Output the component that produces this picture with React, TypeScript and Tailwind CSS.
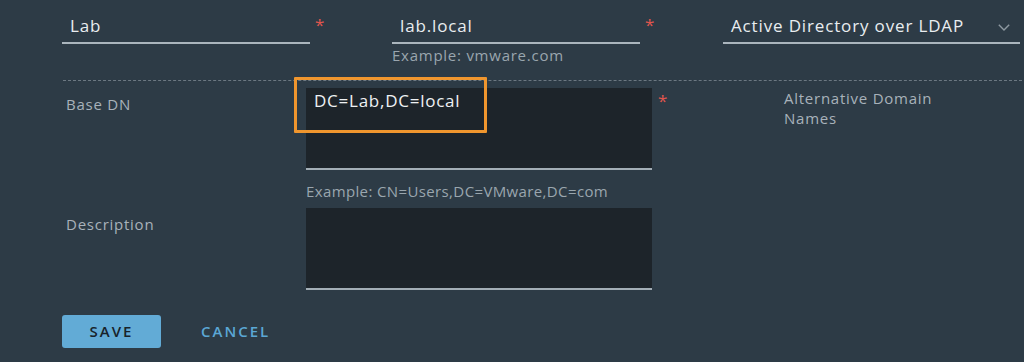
const font = { fontFamily: '"Open Sans", "Liberation Sans", sans-serif' };

function Req() {
  return <span className="text-[#e0564e] text-[17px] leading-none">*</span>;
}

function UnderlineInput({ value }: { value: string }) {
  return (
    <div className="w-[248px] h-[44px] border-b-2 border-[#aab5bd] pl-2 pt-[16px] text-[17px] leading-[20px] tracking-[0.05em] text-[#e9edf0]">
      {value}
    </div>
  );
}

export default function App() {
  return (
    <div className="relative w-[1024px] h-[362px] bg-[#2d3b46] overflow-hidden" style={font}>
      {/* top row */}
      <div className="flex pl-[62px]">
        <div className="w-[330px] flex items-start gap-[5px]">
          <UnderlineInput value="Lab" />
          <div className="pt-[13px]"><Req /></div>
        </div>
        <div className="w-[331px] flex items-start gap-[5px]">
          <div>
            <UnderlineInput value="lab.local" />
            <div className="mt-[2px] text-[15px] leading-[18px] tracking-[0.05em] text-[#9aa6ae]">Example: vmware.com</div>
          </div>
          <div className="pt-[13px]"><Req /></div>
        </div>
        <div className="w-[297px] h-[44px] border-b-2 border-[#aab5bd] pl-2 pt-[16px] flex justify-between text-[17px] leading-[20px] tracking-[0.05em] text-[#e9edf0]">
          <span>Active Directory over LDAP</span>
          <svg width="12" height="7" viewBox="0 0 12 7" className="mt-[8px] mr-[10px]" fill="none">
            <path d="M0.8 0.8 L6 6 L11.2 0.8" stroke="#8e99a1" strokeWidth="1.4" />
          </svg>
        </div>
      </div>

      {/* divider */}
      <div className="ml-[63px] mr-[2px] mt-[16px] border-t border-dashed border-[#6c7882]" />

      {/* form body */}
      <div className="pl-[66px] pt-[7px] text-[15px] tracking-[0.05em] text-[#a8b2ba]">
        <div className="grid grid-cols-[240px_346px_132px_auto]">
          <div className="pt-[6px] leading-[20px]">Base DN</div>
          <div>
            <div className="h-[82px] bg-[#1d242a] border-b-2 border-[#a3aeb6] pl-[8px] pt-[2px] text-[17px] leading-[22px] text-[#eef1f3]">
              DC=Lab,DC=local
            </div>
            <div className="mt-[12px] leading-[18px] tracking-[0.025em] text-[#9aa6ae]">Example: CN=Users,DC=VMware,DC=com</div>
          </div>
          <div className="pl-[6px] pt-[2px] tracking-normal"><Req /></div>
          <div className="leading-[20px] w-[200px]">Alternative Domain Names</div>
        </div>

        <div className="grid grid-cols-[240px_346px] mt-[8px]">
          <div className="pt-[6px] leading-[20px]">Description</div>
          <div className="h-[82px] bg-[#1d242a] border-b-2 border-[#a3aeb6]" />
        </div>
      </div>

      {/* actions */}
      <div className="flex items-center pl-[62px] mt-[25px]">
        <button className="w-[99px] h-[33px] rounded-[3px] bg-[#62abd6] text-[15px] font-semibold tracking-[2px] text-[#18232b]">
          SAVE
        </button>
        <button className="ml-[40px] text-[15px] font-semibold tracking-[2px] text-[#5ba7d5]">CANCEL</button>
      </div>

      {/* highlight annotation */}
      <div className="absolute left-[294px] top-[77px] w-[193px] h-[56px] border-[3px] border-[#f0962e] rounded-[1px]" />
    </div>
  );
}
